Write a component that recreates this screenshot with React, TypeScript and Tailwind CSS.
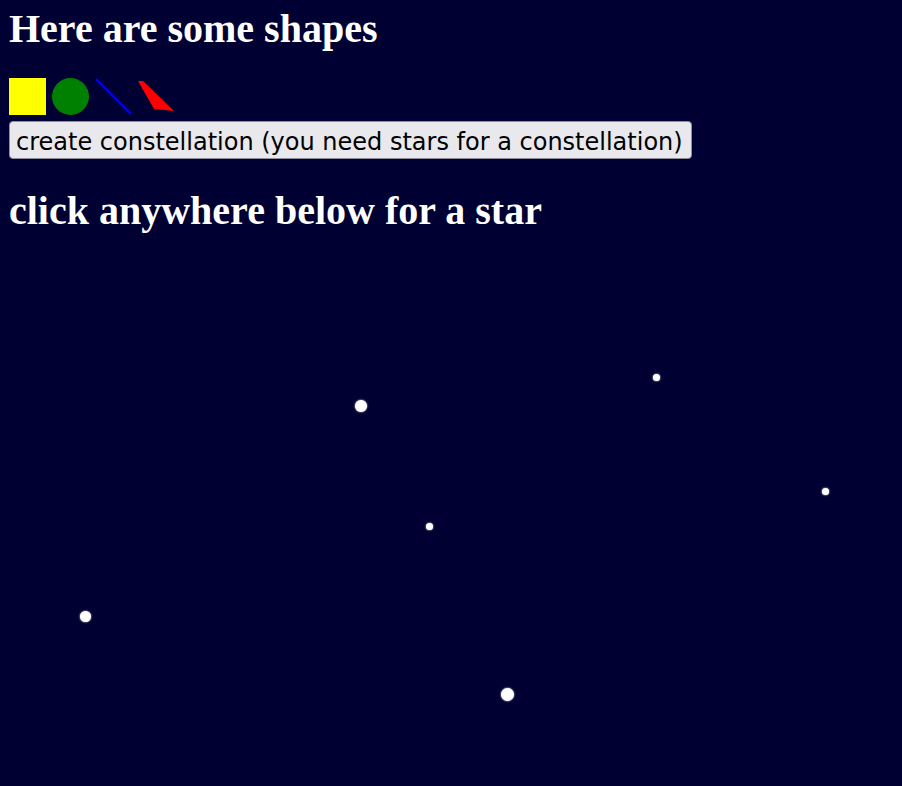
const stars = [
  { x: 361, y: 406, d: 12 },
  { x: 656, y: 377, d: 7 },
  { x: 825, y: 491, d: 7 },
  { x: 429, y: 526, d: 7 },
  { x: 85, y: 616, d: 11 },
  { x: 507, y: 694, d: 13 },
]

function Shapes() {
  return (
    <div className="flex items-start gap-[6px] mt-[26px]">
      <div className="w-[37px] h-[37px] bg-[#ffff00]" />
      <div className="w-[37px] h-[37px] rounded-full bg-[#008000]" />
      <svg width="37" height="37" viewBox="0 0 37 37">
        <line x1="1" y1="1" x2="36" y2="36" stroke="#0000ff" strokeWidth="2" />
      </svg>
      <svg width="37" height="37" viewBox="0 0 37 37">
        <polygon points="0,3 5,3 36,33 16,31" fill="#ff0000" />
      </svg>
    </div>
  )
}

export default function App() {
  return (
    <div className="relative min-h-screen bg-[#000033] px-[9px] pt-[6px] text-white overflow-hidden">
      <h1 className="font-bold text-[40px] leading-[46px] font-['Liberation_Serif',serif]">
        Here are some shapes
      </h1>
      <Shapes />
      <button className="block mt-[6px] h-[38px] pl-[6px] pr-[8px] pt-[4px] rounded-[4px] border border-[#8f8f9d] bg-[#e9e9ed] text-black text-[24px] leading-none font-['DejaVu_Sans',sans-serif]">
        create constellation (you need stars for a constellation)
      </button>
      <h2 className="mt-[29px] font-bold text-[40px] leading-[46px] font-['Liberation_Serif',serif]">
        click anywhere below for a star
      </h2>
      {stars.map((s, i) => (
        <div
          key={i}
          className="absolute rounded-full bg-white shadow-[0_0_2px_#ffffff]"
          style={{ left: s.x - s.d / 2, top: s.y - s.d / 2, width: s.d, height: s.d }}
        />
      ))}
    </div>
  )
}
